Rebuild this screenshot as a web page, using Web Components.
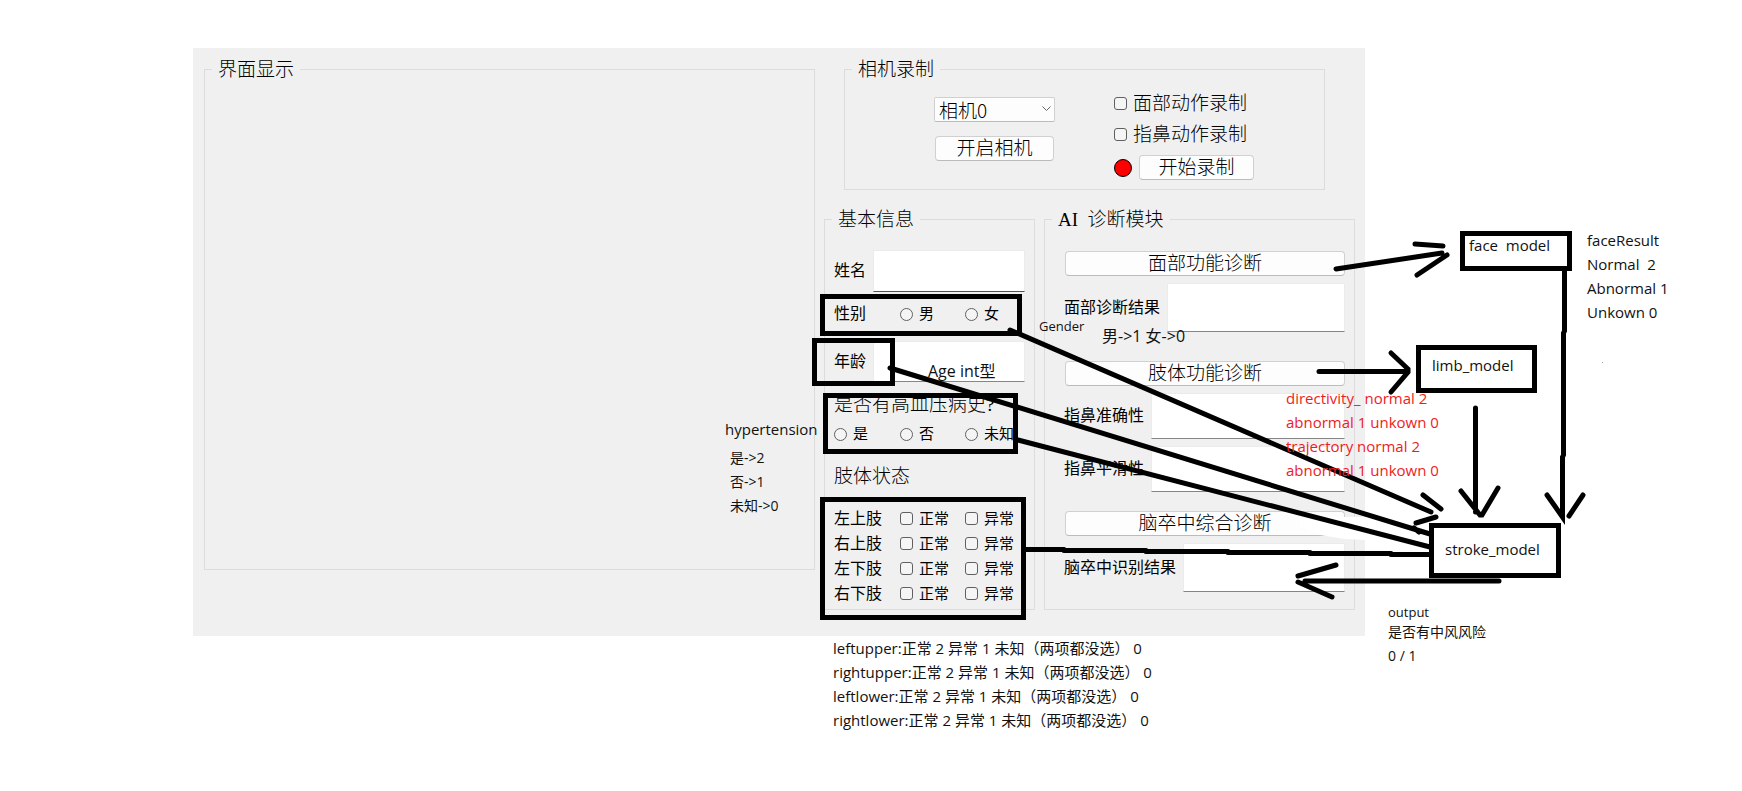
<!DOCTYPE html>
<html lang="zh-CN">
<head>
<meta charset="utf-8">
<title>脑卒中诊断</title>
<style>
  body { margin: 0; background: #fff; }
</style>
</head>
<body>
<stroke-board></stroke-board>
<script>
const shared = `
  *, *::before { box-sizing: border-box; }
  :host { box-sizing: border-box; font-family: "Liberation Serif", "Noto Sans CJK SC", sans-serif; font-size: 16px; line-height: 24px; color: #000; }
  button, select, textarea, input { font: inherit; color: inherit; margin: 0; }
  button, select { height: 25px; padding: 0; font-size: 19px; font-weight: 300; line-height: 23px; background: #fdfdfd;
    border: 1px solid #d0d0d0; border-bottom-color: #bbb; border-radius: 4px; }
  textarea { display: block; resize: none; border: 1px solid #ebebeb; border-bottom-color: #868686;
    background: #fff; padding: 4px; outline: 0; min-width: 0; }
  .row { display: flex; align-items: center; }
  .row label { flex: none; }
  .row textarea { flex: 1; width: 0; align-self: stretch; }
  .pick { display: flex; align-items: center; gap: 6px; white-space: nowrap; }
  .pick input { appearance: none; flex: none; width: 13px; height: 13px; border: 1px solid #606060; border-radius: 3px; background: #f5f5f5; }
  .pick input[type=radio] { border-radius: 50%; }
  .large { font-size: 19px; font-weight: 300; }
`;
function element(name, html) {
  const template = document.createElement('template');
  template.innerHTML = html;
  customElements.define(name, class extends HTMLElement {
    constructor() {
      super();
      this.attachShadow({ mode: 'open' }).append(template.content.cloneNode(true));
    }
  });
}

element('group-box', `<style>
  ${shared}
  :host { display: block; min-width: 0; }
  fieldset { height: 100%; margin: 0; padding: 0; border: 1px solid #dcdcdc; min-width: 0; }
  legend { margin-left: 7px; padding: 2px 6px 0; font-size: 19px; font-weight: 300; line-height: 22px; white-space: pre; }
</style>
<fieldset><legend><slot name="title"></slot></legend><slot></slot></fieldset>`);

element('camera-panel', `<style>
  ${shared}
  :host { display: flex; gap: 59px; padding: 10px 70px 9px 89px; }
  .source { display: flex; flex-direction: column; gap: 14px; width: 121px; padding-top: 6px; }
  .source button { margin: 0 1px; }
  .combo { display: grid; position: relative; }
  .combo select { appearance: none; padding-left: 4px; border-radius: 2px; font-family: "Noto Sans CJK SC", sans-serif; }
  .combo svg { position: absolute; right: 4px; top: 9px; pointer-events: none; }
  .record { flex: 1; display: flex; flex-direction: column; gap: 6px; }
  .record .pick { height: 25px; }
  .start { display: flex; align-items: center; gap: 7px; margin-top: 2px; }
  .lamp { width: 18px; height: 18px; border: 1px solid #000; border-radius: 50%; background: #f00; }
  .start button { width: 115px; }
</style>
<div class="source">
  <div class="combo"><select aria-label="相机"><option>相机0</option></select>
    <svg width="9" height="6" fill="none" stroke="#666"><path d="M.5 .5l4 4 4-4"/></svg></div>
  <button>开启相机</button>
</div>
<div class="record large">
  <label class="pick"><input type="checkbox">面部动作录制</label>
  <label class="pick"><input type="checkbox">指鼻动作录制</label>
  <div class="start"><span class="lamp"></span><button>开始录制</button></div>
</div>`);

const limb = name => `<div class="cols limb" role="group" aria-label="${name}"><span>${name}</span>
  <label class="pick"><input type="checkbox">正常</label>
  <label class="pick"><input type="checkbox">异常</label></div>`;

element('patient-form', `<style>
  ${shared}
  :host { display: block; padding: 19px 9px 2px; }
  .row label { width: 39px; }
  .name { height: 42px; }
  .name textarea { border-bottom: 1px solid #0067c0; }
  .age { height: 41px; margin-top: 5px; }
  .cols { display: grid; grid-template-columns: 66px 65px 1fr; align-items: center; }
  .cols .pick { font-size: 15px; }
  .sex { height: 44px; }
  .history { margin-top: 11px; white-space: nowrap; }
  .answers { margin-top: 5px; }
  .state { margin-top: 19px; margin-bottom: 17px; }
  .limb { height: 25px; }
</style>
<div class="row name"><label for="name">姓名</label><textarea id="name"></textarea></div>
<div class="cols sex" role="radiogroup" aria-label="性别"><span>性别</span>
  <label class="pick"><input type="radio" name="sex">男</label>
  <label class="pick"><input type="radio" name="sex">女</label></div>
<div class="row age"><label for="age">年龄</label><textarea id="age"></textarea></div>
<div class="large history" id="history">是否有高血压病史?</div>
<div class="cols answers" role="radiogroup" aria-labelledby="history">
  <label class="pick"><input type="radio" name="history">是</label>
  <label class="pick"><input type="radio" name="history">否</label>
  <label class="pick"><input type="radio" name="history">未知</label></div>
<div class="large state">肢体状态</div>
${['左上肢', '右上肢', '左下肢', '右下肢'].map(limb).join('')}`);

element('diagnosis-panel', `<style>
  ${shared}
  :host { display: flex; flex-direction: column; padding: 20px 9px 17px 19px; }
  button { margin: 0 0 0 1px; }
  .row { --label: 103px; height: 49px; margin-top: 7px; }
  .row label { width: var(--label); }
  .short { --label: 87px; height: 46px; }
  .long { --label: 119px; }
  .limb { margin-top: 29px; }
  .overall { margin-top: 19px; }
</style>
<button>面部功能诊断</button>
<div class="row"><label for="face">面部诊断结果</label><textarea id="face"></textarea></div>
<button class="limb">肢体功能诊断</button>
<div class="row short"><label for="accuracy">指鼻准确性</label><textarea id="accuracy"></textarea></div>
<div class="row short"><label for="smooth">指鼻平滑性</label><textarea id="smooth"></textarea></div>
<button class="overall">脑卒中综合诊断</button>
<div class="row long"><label for="result">脑卒中识别结果</label><textarea id="result"></textarea></div>`);

element('app-window', `<style>
  ${shared}
  :host { display: flex; gap: 9px; padding: 9px 10px 26px 11px; background: #f0f0f0; }
  .view { flex: 1; margin-bottom: 40px; }
  .side { width: 531px; flex: none; }
  .camera { margin: 0 30px 17px 20px; }
  .forms { display: grid; grid-template-columns: 211px minmax(0, 1fr); gap: 9px; }
</style>
<group-box class="view"><span slot="title">界面显示</span></group-box>
<div class="side">
  <group-box class="camera"><span slot="title">相机录制</span><camera-panel></camera-panel></group-box>
  <div class="forms">
    <group-box><span slot="title">基本信息</span><patient-form></patient-form></group-box>
    <group-box><span slot="title">AI  诊断模块</span><diagnosis-panel></diagnosis-panel></group-box>
  </div>
</div>`);

/* A free note on the canvas; x and y arrive as custom properties. */
element('canvas-note', `<style>
  :host { position: absolute; left: var(--x); top: var(--y); white-space: pre; color: var(--ink, #111);
    font: 15px/24px "Open Sans", "Noto Sans CJK SC", sans-serif; }
  :host([size=tiny]) { font-size: 13px; }
  :host([size=small]) { font-size: 14px; }
  :host([size=large]) { font-size: 16px; }
</style><slot></slot>`);

element('model-node', `<style>
  :host { position: absolute; left: var(--x); top: var(--y); width: var(--w); height: var(--h); box-sizing: border-box;
    border: 5px solid #000; background: #fff; padding: var(--pad); white-space: pre; color: #111;
    font: 15px/24px "Open Sans", "Noto Sans CJK SC", sans-serif; }
  :host([tight]) { line-height: 18px; }
</style><slot></slot>`);

element('flow-notes', `<style>
  :host { position: absolute; top: 0; right: 0; width: 1042px; height: 760px; pointer-events: none; }
  svg { position: absolute; inset: 0; }
</style>
<svg width="1042" height="760" viewBox="700 0 1042 760" aria-hidden="true">
  <path fill="#fff" d="M1300 518l43-1 22 0v23l-20-1-25-4-20-8z"/>
  <g fill="none" stroke="#000" stroke-width="5">
    <path d="M822.500 296.500h197v37h-197z"/>
    <path d="M814.500 340.500h78v43h-78z"/>
    <path d="M825.500 395.500h190v56h-190z"/>
    <path d="M822.500 499.500h201v118h-201z"/>
  </g>
  <g fill="none" stroke="#000" stroke-width="5" stroke-linecap="round">
    <path d="M1010 330L1431 512M1423 495l18 14M1436 517l-20 6"/>
    <path d="M890 368L1430 534M1414 528l5 4"/>
    <path d="M1018 440L1430 547"/>
    <path d="M1026 549.500H1064M1064 550.500H1146M1146 551.500H1228M1228 552.500H1310M1310 553.500H1391M1391 554.500H1430"/>
    <path d="M1305 581H1499M1298 576l38-11M1298 582l34 15"/>
    <path d="M1336 269L1442 253M1415 244l28 2M1447 255l-30 20"/>
    <path d="M1319 371.500H1408M1391 353l17 16v3l-17 20"/>
    <path d="M1475.500 408V512M1461 491l19 24h2l16-27"/>
    <path d="M1564.500 271V331L1563.500 333V455L1562.500 457V517L1547 495M1583 495l-14 21"/>
  </g>
  <path fill="#aaa" d="M1602 362h1v1h-1z"/>
</svg>
<model-node tight style="--x:760px;--y:231px;--w:112px;--h:40px;--pad:0 4px">face  model</model-node>
<model-node style="--x:716px;--y:345px;--w:121px;--h:48px;--pad:3px 11px">limb_model</model-node>
<model-node style="--x:729px;--y:523px;--w:132px;--h:55px;--pad:9px 11px">stroke_model</model-node>
<canvas-note style="--x:887px;--y:228px">faceResult
Normal  2
Abnormal 1
Unkown 0</canvas-note>
<canvas-note style="--x:586px;--y:386px;--ink:#ed1c24">directivity_ normal 2
abnormal 1 unkown 0
trajectory normal 2
abnormal 1 unkown 0</canvas-note>
<canvas-note size="tiny" style="--x:339px;--y:314px">Gender</canvas-note>
<canvas-note size="large" style="--x:402px;--y:324px">男-&gt;1 女-&gt;0</canvas-note>
<canvas-note size="large" style="--x:228px;--y:359px">Age int型</canvas-note>
<canvas-note style="--x:25px;--y:417px">hypertension</canvas-note>
<canvas-note size="small" style="--x:30px;--y:446px">是-&gt;2
否-&gt;1
未知-&gt;0</canvas-note>
<canvas-note style="--x:133px;--y:636px">leftupper:正常 2 异常 1 未知（两项都没选） 0
rightupper:正常 2 异常 1 未知（两项都没选） 0
leftlower:正常 2 异常 1 未知（两项都没选） 0
rightlower:正常 2 异常 1 未知（两项都没选） 0</canvas-note>
<canvas-note size="tiny" style="--x:688px;--y:600px">output</canvas-note>
<canvas-note size="small" style="--x:688px;--y:620px">是否有中风风险
0 / 1</canvas-note>`);

/* The window's left pane takes the spare width; the notes stay tied to its right side. */
element('stroke-board', `<style>
  :host { display: block; box-sizing: border-box; position: relative; min-width: 1400px; padding: 48px 377px 155px 193px; }
</style>
<app-window></app-window>
<flow-notes></flow-notes>`);
</script>
</body>
</html>
